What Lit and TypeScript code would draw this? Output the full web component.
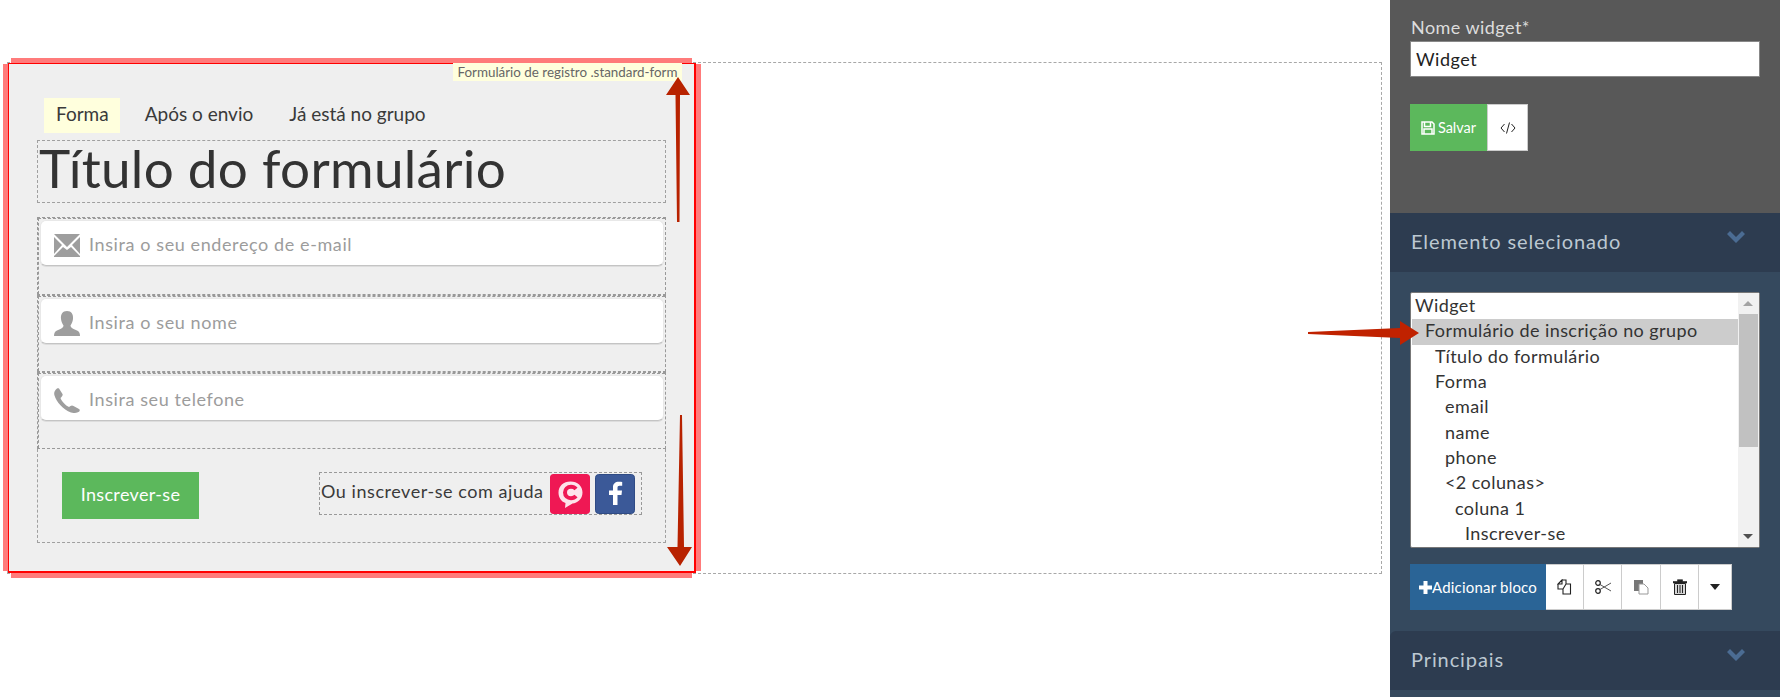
import { LitElement, html, css, svg } from "lit";
import { customElement } from "lit/decorators.js";

const chevron = svg`<svg class="chev" width="18" height="12" viewBox="0 0 18 12"><path d="M0 3 L3 0 L9 6 L15 0 L18 3 L9 12 Z" fill="#4b6c93"/></svg>`;

const rows: [string, number, boolean?][] = [
  ["Widget", 0],
  ["Formulário de inscrição no grupo", 1, true],
  ["Título do formulário", 2],
  ["Forma", 2],
  ["email", 3],
  ["name", 3],
  ["phone", 3],
  ["<2 colunas>", 3],
  ["coluna 1", 4],
  ["Inscrever-se", 5],
];

@customElement("app-root")
export class AppRoot extends LitElement {
  static styles = css`
    :host { display: block; width: 1780px; height: 697px; overflow: hidden; background: #fff; font-family: Lato, "Open Sans", sans-serif; color: #333; }
    * { box-sizing: border-box; }
    .page { display: flex; height: 697px; }
    .main { width: 1390px; padding: 62px 8px 0 7px; }
    .canvas { position: relative; height: 512px; border: 1px dashed #a8a8a8; }
    .form { position: relative; width: 688px; height: 510px; background: #efefef; border: 2px solid #f00; border-top-width: 1px; border-left-width: 1px; padding: 34px 28px 0 28px; }
    .band { position: absolute; background: #ff7b7b; }
    .b-top { left: 2px; right: 2px; top: -6px; height: 5px; }
    .b-bot { left: 2px; right: 2px; bottom: -7px; height: 5px; }
    .b-left { left: -6px; top: 0; bottom: 0; width: 5px; }
    .b-right { right: -7px; top: 0; bottom: 0; width: 5px; }
    .tag { position: absolute; right: 12px; top: -1px; height: 18px; width: 229px; background: #ffffdd; color: #666; font-size: 13.4px; line-height: 18px; text-align: center; white-space: nowrap; }
    .tabs { display: flex; height: 35px; margin-left: 7px; margin-bottom: 7px; font-size: 19px; line-height: 32px; }
    .tab { padding: 0 12px; margin-right: 12px; white-space: nowrap; color: #3a3a3a; }
    .tab.on { background: #ffffdd; padding-right: 11px; margin-right: 13px; }
    .title { height: 63px; border: 1px dashed #a0a0a0; font-size: 53px; line-height: 53px; padding-left: 1px; margin-bottom: 14px; white-space: nowrap; letter-spacing: .3px; font-weight: 400; color: #333; }
    .field { height: 77px; border: 1px dashed #999; }
    .field.first { height: 78px; }
    .field-in { height: 100%; border-top: 1px dashed #999; border-left: 1px dashed #999; padding: 1px 1px 0 1px; }
    .input { display: flex; align-items: center; height: 46px; width: 624px; background: #fff; border: 1px solid #e8e8e8; border-bottom: 1px solid #c4c4c4; box-shadow: 0 1px 0 #ddd; border-radius: 6px; padding: 1px 0 0 13px; color: #9c9c9c; font-size: 18px; letter-spacing: .6px; white-space: nowrap; }
    .input svg { margin: 4px 9px 0 0; flex: none; }
    .foot { display: flex; height: 94px; width: 629px; border: 1px dashed #a0a0a0; border-top: 0; padding: 23px 23px 0 24px; justify-content: space-between; align-items: flex-start; }
    .submit { width: 137px; height: 47px; background: #5cb85c; color: #fff; font-size: 18px; line-height: 45px; text-align: center; letter-spacing: .35px; white-space: nowrap; }
    .social { display: flex; align-items: center; width: 323px; height: 43px; border: 1px dashed #999; padding-left: 1px; font-size: 18px; letter-spacing: .55px; white-space: nowrap; }
    .social span { width: 229px; margin-bottom: 5px; color: #3a3a3a; }
    .soc { width: 40px; height: 40px; border-radius: 3px; margin-right: 5px; }
    .arrows { position: absolute; left: 0; top: 0; pointer-events: none; z-index: 5; }
    .side { width: 390px; flex: none; background: #35495e; position: relative; }
    .s-top { height: 213px; background: #585858; padding: 15px 20px 0 20px; }
    .s-label { font-size: 18px; line-height: 24px; color: #ddd; padding-left: 1px; letter-spacing: .45px; margin-bottom: 2px; white-space: nowrap; }
    .s-input { height: 36px; width: 350px; background: #fff; border: 1px solid #888; color: #222; font-size: 18px; line-height: 34px; padding-left: 5px; letter-spacing: .5px; }
    .s-btns { display: flex; margin-top: 27px; height: 47px; }
    .save { width: 77px; background: #5cb85c; color: #fff; font-size: 14.5px; display: flex; align-items: center; justify-content: center; gap: 3px; white-space: nowrap; }
    .code { width: 41px; background: #fff; border: 1px solid #ccc; color: #222; display: flex; align-items: center; justify-content: center; }
    .head { height: 59px; background: #2d3c50; color: #bcc8d2; font-size: 20px; letter-spacing: .9px; padding-left: 21px; line-height: 56px; position: relative; white-space: nowrap; }
    .chev { position: absolute; left: 337px; top: 18px; }
    .list { display: flex; width: 350px; height: 256px; margin: 20px 0 0 20px; background: #fff; border: 1px solid #777; border-radius: 2px; }
    .rows { width: 327px; padding: 1px 0 0 1px; }
    .row { height: 25.35px; line-height: 23px; font-size: 18px; letter-spacing: .42px; color: #333; white-space: nowrap; }
    .row.sel { background: #ccc; }
    .sb { width: 21px; background: #f1f1f1; position: relative; padding: 21px 1px 0 1px; }
    .thumb { height: 133px; background: #c1c1c1; }
    .tri-up, .tri-dn { position: absolute; left: 5px; width: 0; height: 0; border-left: 5px solid transparent; border-right: 5px solid transparent; }
    .tri-up { top: 8px; border-bottom: 5px solid #a3a3a3; }
    .tri-dn { bottom: 8px; border-top: 5px solid #505050; }
    .tools { display: flex; height: 46px; margin: 16px 0 21px 20px; }
    .add { width: 136px; background: #2a6496; color: #fff; font-size: 15px; display: flex; align-items: center; justify-content: center; white-space: nowrap; letter-spacing: .2px; }
    .tool { background: #fff; border: 1px solid #ccc; border-left: 0; display: flex; align-items: center; justify-content: center; }
    .head.round { border-top-left-radius: 6px; }
  `;

  render() {
    return html`<div class="page">
      <div class="main">
        <div class="canvas">
          <div class="form">
            <i class="band b-top"></i><i class="band b-bot"></i><i class="band b-left"></i><i class="band b-right"></i>
            <div class="tag">Formulário de registro .standard-form</div>
            <div class="tabs">
              <div class="tab on">Forma</div><div class="tab">Após o envio</div><div class="tab">Já está no grupo</div>
            </div>
            <div class="title">Título do formulário</div>
            <div class="field first"><div class="field-in"><div class="input">
              <svg width="26" height="23" viewBox="0 0 26 23"><path d="M0 0H26L13 13Z M0 3V20L8 11Z M26 3V20L18 11Z M0 23V22L9 13L13 16L17 13L26 22V23Z" fill="#9e9e9e"/></svg>
              Insira o seu endereço de e-mail</div></div></div>
            <div class="field"><div class="field-in"><div class="input">
              <svg width="26" height="25" viewBox="0 0 26 25"><path d="M13 0C17.500 0 19.500 3.500 19 8C18.700 11 17.500 13 16.500 14.500C16.500 17 20 18 23 19.500C25 20.500 26 22 26 25H0C0 22 1 20.500 3 19.500C6 18 9.500 17 9.500 14.500C8.500 13 7.300 11 7 8C6.500 3.500 8.500 0 13 0Z" fill="#9e9e9e"/></svg>
              Insira o seu nome</div></div></div>
            <div class="field"><div class="field-in"><div class="input">
              <svg width="26" height="25" viewBox="0 0 26 25"><path d="M5 0.500L8.500 6C9 7 8.500 8 7.500 9L6.500 10C7.500 13 11.500 17.500 15 19L16.500 18C17.500 17.300 18.500 17.300 19.500 18L25 21C26 21.500 26 23 25 23.700C23 25 20 25.500 17 24.500C9 21.500 2.500 14 0.500 7.500C-0.500 4.500 1 2 3 0.500C3.700 0 4.500 0 5 0.500Z" fill="#9e9e9e"/></svg>
              Insira seu telefone</div></div></div>
            <div class="foot">
              <div class="submit">Inscrever-se</div>
              <div class="social">
                <span>Ou inscrever-se com ajuda</span>
                <svg class="soc" viewBox="0 0 40 40"><rect width="40" height="40" rx="3" fill="#ef1854"/><path d="M20.500 7.500C27.500 7.500 32.500 12 32.500 18.500C32.500 25 27.500 29 22.500 29.500L15 34L15.500 29C11 27.500 8.500 23.500 8.500 18.500C8.500 12 13.500 7.500 20.500 7.500Z" fill="#fde3ea"/><path d="M26 15C24.800 13.500 23 12.800 21 12.800C17.500 12.800 15 15.200 15 18.500C15 21.800 17.500 24.200 21 24.200C23 24.200 24.800 23.500 26 22" fill="none" stroke="#ef1854" stroke-width="4"/></svg>
                <svg class="soc" viewBox="0 0 40 40"><rect x=".5" y=".5" width="39" height="39" rx="3" fill="#3b5998" stroke="#2f4b85"/><path d="M22.500 31V21H26.500L27 16.500H22.500V13.800C22.500 12.500 23 11.800 24.500 11.800H27.200V8C26.200 7.900 25.200 7.800 23.800 7.800C20.300 7.800 18 9.800 18 13V16.500H14V21H18V31Z" fill="#fff"/></svg>
              </div>
            </div>
          </div>
        </div>
      </div>
      <div class="side">
        <div class="s-top">
          <div class="s-label">Nome widget*</div>
          <div class="s-input">Widget</div>
          <div class="s-btns">
            <div class="save"><svg width="14" height="14" viewBox="0 0 14 14"><path d="M1 1H11L13 3V13H1Z M3.500 1.500V5.500H9.500V1.500 M3 13V8H11V13" fill="none" stroke="#fff" stroke-width="1.500"/></svg>Salvar</div>
            <div class="code"><svg width="16" height="12" viewBox="0 0 16 12"><path d="M4.500 2L1 6L4.500 10 M11.500 2L15 6L11.500 10 M9.500 .5L6.500 11.500" fill="none" stroke="#222" stroke-width="1"/></svg></div>
          </div>
        </div>
        <div class="head">Elemento selecionado ${chevron}</div>
        <div class="list">
          <div class="rows">
            ${rows.map(
              ([t, lvl, sel]) => html`<div class="row ${sel ? "sel" : ""}" style="padding-left:${3 + lvl * 10}px">${t}</div>`
            )}
          </div>
          <div class="sb"><i class="tri-up"></i><div class="thumb"></div><i class="tri-dn"></i></div>
        </div>
        <div class="tools">
          <div class="add"><svg width="13" height="13" viewBox="0 0 13 13"><path d="M4.500 0H8.500V4.500H13V8.500H8.500V13H4.500V8.500H0V4.500H4.500Z" fill="#fff"/></svg>Adicionar bloco</div>
          <div class="tool" style="width:38px"><svg width="16" height="16" viewBox="0 0 16 16"><path d="M5 1H9V5H13.500V15H6V10H1V5Z M5 1L1 5H5Z M9 5L6 10" fill="#fff" stroke="#222" stroke-width="1.100"/></svg></div>
          <div class="tool" style="width:38px"><svg width="16" height="14" viewBox="0 0 16 14"><circle cx="3" cy="3" r="2.300" fill="none" stroke="#222" stroke-width="1.200"/><circle cx="3" cy="11" r="2.300" fill="none" stroke="#222" stroke-width="1.200"/><path d="M5 4.500L16 11 M5 9.500L16 3" stroke="#555" stroke-width="1"/></svg></div>
          <div class="tool" style="width:39px"><svg width="16" height="16" viewBox="0 0 16 16"><path d="M1 1H10V12H1Z" fill="#777"/><path d="M6 5H11L15 9V15H6Z" fill="#fff" stroke="#999"/></svg></div>
          <div class="tool" style="width:38px"><svg width="14" height="16" viewBox="0 0 14 16"><path d="M0 2.500H14V4H0Z M4.500 2.500V.7H9.500V2.500" fill="#222" stroke="#222" stroke-width=".6"/><path d="M1.500 4.500H12.500V15.500H1.500Z" fill="#d5d5d5" stroke="#222"/><path d="M4.500 6V14 M7 6V14 M9.500 6V14" stroke="#222" stroke-width="1"/></svg></div>
          <div class="tool" style="width:33px"><svg width="10" height="6" viewBox="0 0 10 6"><path d="M0 0H10L5 6Z" fill="#222"/></svg></div>
        </div>
        <div class="head round">Principais ${chevron}</div>
      </div>
      <svg class="arrows" width="1780" height="697" viewBox="0 0 1780 697">
        <path d="M678 77L690 95H680L679.500 222H677L675.500 95H666Z" fill="#b82200"/>
        <path d="M680 415H682L684 547H692L680 566L667 547H677.500Z" fill="#b82200"/>
        <path d="M1308 332L1400 328V321L1419 333L1400 345V338L1308 334Z" fill="#c02200"/>
      </svg>
    </div>`;
  }
}
